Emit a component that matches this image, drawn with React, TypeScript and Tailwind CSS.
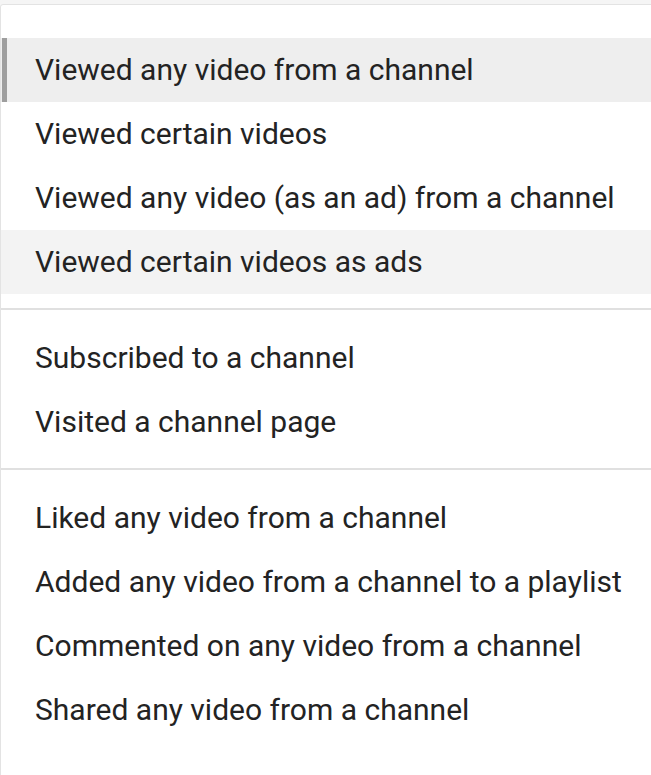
import React from 'react';

const sections: string[][] = [
  [
    'Viewed any video from a channel',
    'Viewed certain videos',
    'Viewed any video (as an ad) from a channel',
    'Viewed certain videos as ads',
  ],
  ['Subscribed to a channel', 'Visited a channel page'],
  [
    'Liked any video from a channel',
    'Added any video from a channel to a playlist',
    'Commented on any video from a channel',
    'Shared any video from a channel',
  ],
];

const App: React.FC = () => {
  return (
    <div className="w-[651px] h-[775px] overflow-hidden bg-[#f5f5f5] pt-[4px] font-['Roboto',sans-serif]">
      <div className="h-[780px] w-[700px] bg-white border border-[#e3e3e3] rounded-tl-[3px] pt-[33px]">
        {sections.map((items, si) => (
          <div key={si}>
            {si > 0 && <div className="h-[2px] bg-[#e0e0e0] mt-[14px] mb-[16px]" />}
            {items.map((label, i) => {
              const focused = si === 0 && i === 0;
              const hovered = si === 0 && i === 3;
              return (
                <div
                  key={label}
                  className={
                    'relative h-[64px] flex items-center pl-[34px] pb-[2px] text-[30px] text-[#232323] ' +
                    (focused ? 'bg-[#eeeeee]' : hovered ? 'bg-[#f3f3f3]' : '')
                  }
                >
                  {focused && <div className="absolute left-px top-0 bottom-0 w-[5px] bg-[#9e9e9e]" />}
                  {label}
                </div>
              );
            })}
          </div>
        ))}
      </div>
    </div>
  );
};

export default App;
